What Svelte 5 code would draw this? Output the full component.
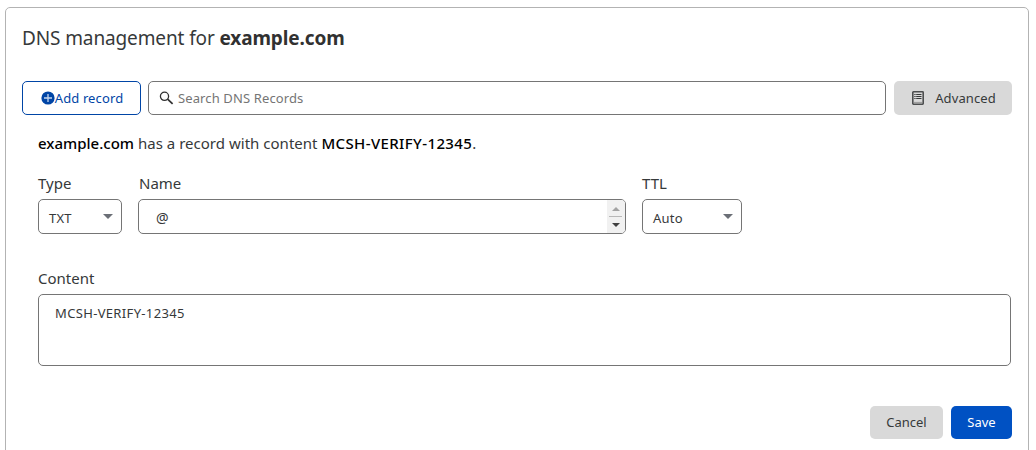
<script>
  let search = $state('');
  let content = $state('MCSH-VERIFY-12345');
</script>

<main class="card">
  <h1>DNS management for <b>example.com</b></h1>

  <div class="toolbar">
    <button class="btn add">
      <svg width="14" height="14" viewBox="0 0 14 14"><circle cx="7" cy="7" r="6.6" fill="#0045a6" /><path d="M7 3v8M3 7h8" stroke="#c5d6ee" stroke-width="1.3" /></svg>
      <span>Add record</span>
    </button>
    <label class="search">
      <svg width="15" height="14" viewBox="0 0 15 14" fill="none" stroke="#313131"><circle cx="5.5" cy="5.3" r="4.1" stroke-width="1.3" /><path d="M8.6 8.2l5 4.6" stroke-width="1.7" /></svg>
      <input placeholder="Search DNS Records" bind:value={search} />
    </label>
    <button class="btn grey advanced">
      <svg width="12" height="14" viewBox="0 0 12 14" fill="none" stroke="#36393a"><rect x=".8" y=".8" width="10.4" height="12.4" rx=".6" stroke="#4c4e4f" stroke-width="1.6" /><path d="M2.3 3.5h1.3M4.2 3.5h5.3M2.3 5.5h1.3M4.2 5.5h5.3M2.3 7.5h1.3M4.2 7.5h5.3" stroke-width="1" /><path d="M2 11.4h8" stroke="#999" stroke-width="1" /></svg>
      <span>Advanced</span>
    </button>
  </div>

  <section class="record">
    <p class="summary"><strong>example.com</strong> <span>has a record with content</span> <strong class="value">MCSH-VERIFY-12345</strong>.</p>

    <div class="fields">
      <div class="field type">
        <span class="label">Type</span>
        <div class="select"><span>TXT</span><i class="caret"></i></div>
      </div>
      <div class="field name">
        <span class="label">Name</span>
        <div class="box">
          <span>@</span>
          <div class="scroll"><i class="up"></i><hr /><i class="down"></i></div>
        </div>
      </div>
      <div class="field ttl">
        <span class="label">TTL</span>
        <div class="select"><span>Auto</span><i class="caret"></i></div>
      </div>
    </div>

    <div class="field content">
      <span class="label">Content</span>
      <textarea bind:value={content} spellcheck="false"></textarea>
    </div>
  </section>

  <div class="actions">
    <button class="btn grey cancel"><span>Cancel</span></button>
    <button class="btn save"><span>Save</span></button>
  </div>
</main>

<style>
  :global(body) { background: #fff; overflow: hidden; }
  * { box-sizing: border-box; }
  .card {
    width: 1024px; height: 460px; margin: 7px 0 0 5px; padding: 0 16px;
    border: 1px solid #b3b3b3; border-radius: 5px;
    font: 14px/20px 'Noto Sans', sans-serif; color: #36393a;
  }
  h1 { margin: 16px 0 0; font-size: 19px; line-height: 28px; font-weight: 400; letter-spacing: -.12px; white-space: nowrap; }
  h1 b { font-weight: 700; color: #313131; }
  button, input, textarea { font: inherit; color: inherit; }
  .toolbar { display: flex; margin-top: 29px; height: 34px; }
  .btn { display: flex; align-items: center; justify-content: center; padding: 0; border: 0; border-radius: 5px; font-size: 13px; white-space: nowrap; }
  .grey { background: #d9d9d9; }
  .add { width: 119px; border: 1px solid #0045a6; background: #fff; color: #0045a6; letter-spacing: .12px; padding-left: 1px; }
  .search { display: flex; align-items: center; width: 738px; margin: 0 8px 0 7px; padding-left: 10px; border: 1px solid #757575; border-radius: 5px; }
  .search input { flex: 1; border: 0; outline: 0; padding: 0; margin-left: 4px; font-size: 13px; letter-spacing: .12px; background: none; }
  .search input::placeholder { color: #757575; }
  .advanced { width: 118px; padding-left: 2px; letter-spacing: .1px; }
  .advanced svg { margin-right: 11px; }
  .record { padding: 0 0 0 16px; }
  .summary { margin: 18px 0 0; font-size: 15px; line-height: 20px; white-space: nowrap; }
  .summary strong { font-weight: 500; color: #000; }
  .summary span { letter-spacing: .02px; }
  .summary .value { letter-spacing: .38px; }
  .fields { display: flex; margin-top: 20px; }
  .label { display: block; font-size: 15px; line-height: 20px; margin-bottom: 6px; }
  .type { width: 84px; }
  .name { width: 488px; margin: 0 16px; }
  .name .label { padding-left: 1px; }
  .ttl { width: 100px; }
  .select, .box { display: flex; justify-content: space-between; align-items: center; height: 35px; border: 1px solid #757575; border-radius: 5px; font-size: 13px; overflow: hidden; }
  .select { padding: 2px 8px 0 10px; }
  .select span { letter-spacing: .2px; }
  .box > span { padding: 2px 0 0 17px; font-size: 14px; }
  .caret, .up, .down { width: 0; height: 0; border: 5px solid transparent; border-bottom: 0; border-top-color: #6b6f76; }
  .caret { margin-top: -3px; }
  .scroll { display: flex; flex-direction: column; align-items: center; justify-content: center; width: 18px; height: 100%; padding-right: 1px; background: #f1f1f1; }
  .scroll hr { width: 13px; height: 1px; margin: 5px 0 6px; border: 0; background: #b8b8b8; }
  .up { border: 4px solid transparent; border-top: 0; border-bottom-color: #a3a3a3; }
  .down { border-width: 4px 4px 0; border-top-color: #404040; }
  .content { margin-top: 34px; }
  textarea { display: block; width: 973px; height: 72px; padding: 8px 16px; border: 1px solid #757575; border-radius: 5px; outline: 0; resize: none; font-size: 13px; line-height: 20px; letter-spacing: .34px; }
  .actions { display: flex; justify-content: flex-end; gap: 8px; margin-top: 40px; }
  .actions .btn { height: 33px; padding-bottom: 2px; }
  .cancel { width: 73px; }
  .save { width: 61px; background: #0051c3; color: #fff; }
</style>
